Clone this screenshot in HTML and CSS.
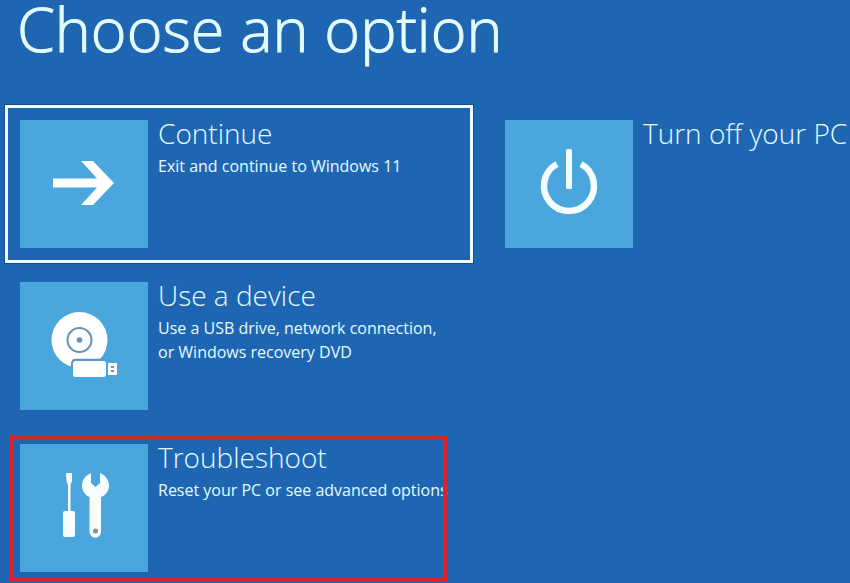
FILE: index.html
```html
<!DOCTYPE html>
<html lang="en">
<head>
    <meta charset="UTF-8">
    <meta name="viewport" content="width=device-width, initial-scale=1.0">
    <title>Choose an option</title>
    <link rel="stylesheet" href="styles.css">
</head>
<body>
    <main class="screen">
        <h1>Choose an option</h1>

        <div class="options">
            <button type="button" class="option selected">
                <span class="tile">
                    <!-- Arrow -->
                    <svg viewBox="0 0 128 128" aria-hidden="true">
                        <path d="M33 58.500H77L61 41H73L94 63L73 85H61L77 67.500H33Z" fill="#fff"/>
                    </svg>
                </span>
                <span class="text">
                    <span class="name">Continue</span>
                    <span class="description">Exit and continue to Windows 11</span>
                </span>
            </button>

            <button type="button" class="option">
                <span class="tile">
                    <!-- Power -->
                    <svg viewBox="0 0 128 128" aria-hidden="true">
                        <path d="M52 44A25 25 0 1 0 76 44" fill="none" stroke="#f4fdff" stroke-width="6.500"/>
                        <rect x="61" y="29" width="6" height="40" rx="1.500" fill="#f4fdff"/>
                    </svg>
                </span>
                <span class="text">
                    <span class="name">Turn off your PC</span>
                </span>
            </button>

            <button type="button" class="option">
                <span class="tile">
                    <!-- Disc and USB drive -->
                    <svg viewBox="0 0 128 128" aria-hidden="true">
                        <circle cx="59.500" cy="58" r="28" fill="#fff"/>
                        <circle cx="59.500" cy="58" r="12" fill="none" stroke="#5f93b8" stroke-width="2"/>
                        <circle cx="59.500" cy="58" r="2.800" fill="#5f93b8"/>
                        <path d="M51 86V82Q51 77 56 77H84L88 81V96H51Z" fill="#4ba6dd"/>
                        <path d="M52 86V82Q52 77.500 56 77.500H83" fill="none" stroke="#5f93b8" stroke-width="1.500"/>
                        <rect x="53" y="79" width="33" height="16" rx="2.500" fill="#fff"/>
                        <rect x="88" y="81" width="9" height="12" rx="1" fill="#fff"/>
                        <rect x="91" y="84" width="3" height="2" fill="#5f93b8"/>
                        <rect x="91" y="88" width="3" height="2" fill="#5f93b8"/>
                    </svg>
                </span>
                <span class="text">
                    <span class="name">Use a device</span>
                    <span class="description">Use a USB drive, network connection, or Windows recovery DVD</span>
                </span>
            </button>

            <button type="button" class="option marked">
                <span class="tile">
                    <!-- Screwdriver and wrench -->
                    <svg viewBox="0 0 128 128" aria-hidden="true">
                        <path d="M46 29H52V37L50.500 41V67H53Q55 67 55 69V91Q55 93 53 93H45Q43 93 43 91V69Q43 67 45 67H48V41L46.500 37Z" fill="#f8feff"/>
                        <path d="M71 29V39L75.500 43L80 39V29C85 31 89 36 89 41C89 47 86 51 81 53V88A5.500 5.500 0 0 1 69.500 88V53C65 51 62 47 62 41C62 36 66 31 71 29Z" fill="#f8feff"/>
                        <circle cx="75.500" cy="87" r="2.500" fill="#74929f"/>
                    </svg>
                </span>
                <span class="text">
                    <span class="name">Troubleshoot</span>
                    <span class="description">Reset your PC or see advanced options</span>
                </span>
            </button>
        </div>
    </main>
</body>
</html>
```
FILE: styles.css
```css
body {
    margin: 0;
    background: #1f66b2;
    color: #e4fbff;
    font-family: 'Open Sans', 'Segoe UI', sans-serif;
    overflow: hidden;
}

.screen {
    padding: 0 0 0 5px;
}

h1 {
    margin: 0 0 47px 12px;
    font-size: 61px;
    line-height: 58px;
    font-weight: 300;
    -webkit-text-stroke: 1px #e4fbff;
}

.options {
    display: grid;
    grid-template-columns: 13fr 10fr;
    gap: 4px 17px;
}

.option {
    display: flex;
    align-items: flex-start;
    gap: 10px;
    position: relative;
    min-width: 0;
    padding: 12px 0 12px 12px;
    border: 3px solid transparent;
    background: none;
    color: inherit;
    font: inherit;
    text-align: left;
    cursor: pointer;
}

.option.selected {
    border-color: #f0fcff;
    outline: 1px solid #174f90;
}

.option.marked {
    grid-column: 1;
}

/* Red frame drawn round the highlighted option */
.option.marked::after {
    content: "";
    position: absolute;
    top: 3px;
    right: 23px;
    bottom: 2px;
    left: 1px;
    border: 4px solid #d9232f;
}

.tile {
    flex: none;
    width: 128px;
    height: 128px;
    background: #4ba6dd;
}

.tile svg {
    display: block;
}

.text {
    display: flex;
    flex-direction: column;
    gap: 8px;
}

.name {
    font-size: 28px;
    line-height: 26px;
    font-weight: 300;
    white-space: nowrap;
}

.description {
    max-width: 294px;
    font-size: 16px;
    line-height: 24px;
}
```
